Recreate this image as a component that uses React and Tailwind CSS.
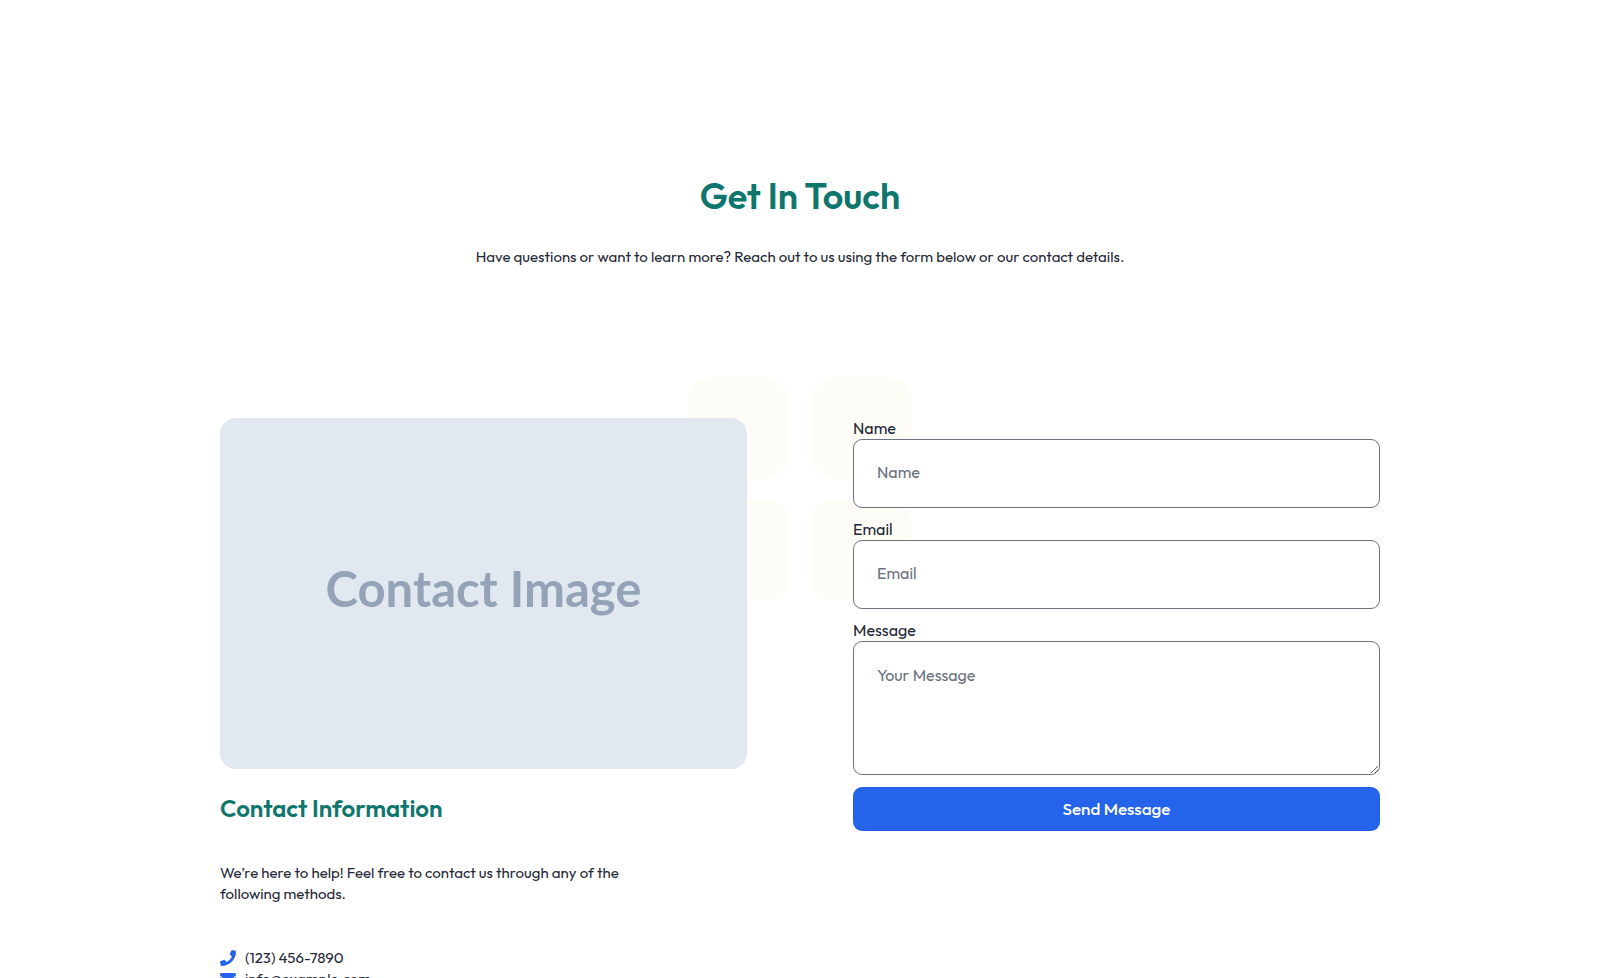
import React from 'react';
import { FaPhone, FaEnvelope } from 'react-icons/fa';

const contacts = [
  { icon: FaPhone, text: '(123) 456-7890', href: 'tel:1234567890' },
  { icon: FaEnvelope, text: 'info@example.com', href: 'mailto:info@example.com' },
];

export default function App() {
  return (
    <div className="relative h-screen overflow-hidden bg-white font-['Outfit','Lato',sans-serif] text-[15px] leading-[21px] text-[#1f2937]">
      <BackgroundTiles />

      <main className="relative mx-auto max-w-[1240px] px-10 pt-[172px]">
        <header className="text-center">
          <h1 className="text-[36px] leading-[48px] font-semibold text-[#0f766e]">Get In Touch</h1>
          <p className="mt-[26px]">
            Have questions or want to learn more? Reach out to us using the form below or our contact details.
          </p>
        </header>

        <section className="mt-[151px] grid grid-cols-2 items-start gap-[106px]">
          <ContactInfo />
          <ContactForm />
        </section>
      </main>
    </div>
  );
}

function BackgroundTiles() {
  return (
    <div className="absolute inset-0 flex items-center justify-center" aria-hidden="true">
      <div className="grid grid-cols-2 gap-[22px]">
        <div className="size-[100px] rounded-[22px] bg-[#fefcf7]" />
        <div className="size-[100px] rounded-[22px] bg-[#fefcf7]" />
        <div className="size-[100px] rounded-[22px] bg-[#fefcf7]" />
        <div className="size-[100px] rounded-[22px] bg-[#fefcf7]" />
      </div>
    </div>
  );
}

function ContactInfo() {
  return (
    <div>
      <div className="flex aspect-[3/2] items-center justify-center rounded-2xl bg-[#e2e8f0] pb-2.5 font-['Lato',sans-serif] text-[49px] leading-none font-bold text-[#94a3b8]">
        Contact Image
      </div>
      <h2 className="mt-[23px] text-[24px] leading-[32px] font-semibold text-[#0f766e]">Contact Information</h2>
      <p className="mt-[38px] max-w-[430px]">
        We’re here to help! Feel free to contact us through any of the following methods.
      </p>
      <ul className="mt-[43px]">
        {contacts.map(({ icon: Icon, text, href }) => (
          <li key={text} className="flex items-center">
            <Icon className="mr-[9px] size-4 text-[#2563eb]" />
            <a href={href}>{text}</a>
          </li>
        ))}
      </ul>
    </div>
  );
}

function ContactForm() {
  const label = 'block h-[21px] leading-5';
  const field =
    'block w-full rounded-[9px] border border-[#6b7280] bg-white px-[23px] placeholder:text-[#6b7280]';

  return (
    <form className="text-[16px]" onSubmit={(e) => e.preventDefault()}>
      <label htmlFor="name" className={label}>Name</label>
      <input id="name" type="text" placeholder="Name" className={`${field} mb-[11px] h-[69px] pb-1`} />

      <label htmlFor="email" className={label}>Email</label>
      <input id="email" type="email" placeholder="Email" className={`${field} mb-[11px] h-[69px] pb-1`} />

      <label htmlFor="message" className={label}>Message</label>
      <textarea id="message" placeholder="Your Message" className={`${field} h-[134px] py-[23px]`} />

      <button type="submit" className="mt-3 h-11 w-full rounded-[9px] bg-[#2563eb] pb-0.5 text-[17px] font-medium text-white">
        Send Message
      </button>
    </form>
  );
}
